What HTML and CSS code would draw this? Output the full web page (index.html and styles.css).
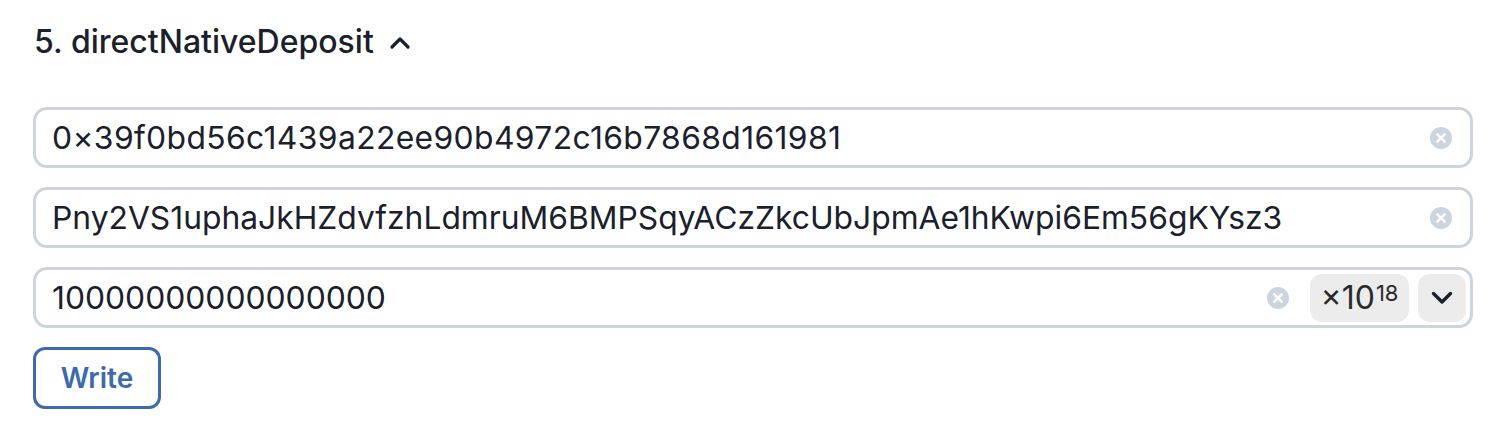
FILE: index.html
```html
<!DOCTYPE html>
<html>
<head>
<meta charset="utf-8">
<link rel="stylesheet" href="styles.css">
</head>
<body>
<div class="section">
  <div class="title">
    <span class="title-text">5. directNativeDeposit</span>
    <svg class="chev-up" width="22" height="14" viewBox="0 0 22 14"><path d="M3 11 L11 3 L19 11" fill="none" stroke="#1a202c" stroke-width="3.2" stroke-linecap="round" stroke-linejoin="round"/></svg>
  </div>
  <div class="fields">
    <div class="field">
      <span class="value value-address">0×39f0bd56c1439a22ee90b4972c16b7868d161981</span>
      <span class="clear"><svg width="22" height="22" viewBox="0 0 22 22"><circle cx="11" cy="11" r="11" fill="#cbd5e0"/><path d="M7.3 7.3 L14.7 14.7 M14.7 7.3 L7.3 14.7" stroke="#fff" stroke-width="2.6" stroke-linecap="round"/></svg></span>
    </div>
    <div class="field">
      <span class="value">Pny2VS1uphaJkHZdvfzhLdmruM6BMPSqyACzZkcUbJpmAe1hKwpi6Em56gKYsz3</span>
      <span class="clear"><svg width="22" height="22" viewBox="0 0 22 22"><circle cx="11" cy="11" r="11" fill="#cbd5e0"/><path d="M7.3 7.3 L14.7 14.7 M14.7 7.3 L7.3 14.7" stroke="#fff" stroke-width="2.6" stroke-linecap="round"/></svg></span>
    </div>
    <div class="field field-num">
      <span class="value">10000000000000000</span>
      <span class="clear"><svg width="22" height="22" viewBox="0 0 22 22"><circle cx="11" cy="11" r="11" fill="#cbd5e0"/><path d="M7.3 7.3 L14.7 14.7 M14.7 7.3 L7.3 14.7" stroke="#fff" stroke-width="2.6" stroke-linecap="round"/></svg></span>
      <span class="badge">×10<sup>18</sup></span>
      <span class="drop"><svg width="24" height="15" viewBox="0 0 24 15"><path d="M3.5 3.5 L12 12 L20.5 3.5" fill="none" stroke="#1a202c" stroke-width="3.4" stroke-linecap="round" stroke-linejoin="round"/></svg></span>
    </div>
  </div>
  <button class="write">Write</button>
</div>
</body>
</html>
```
FILE: styles.css
```css
* { box-sizing: border-box; }
html, body { margin: 0; padding: 0; background: #fff; }
body { font-family: Inter, "Noto Sans", sans-serif; color: #1a202c; }
.section { padding: 22px 27px 0 33px; }
.title {
  display: flex;
  align-items: center;
  gap: 15px;
  height: 40px;
  font-size: 32px;
  line-height: 40px;
  font-weight: 500;
}
.title-text { padding-left: 1px; }
.chev-up { margin-top: 2px; }
.fields {
  margin-top: 45px;
  display: flex;
  flex-direction: column;
  gap: 19px;
}
.field {
  height: 61px;
  border: 3px solid #cbd5e0;
  border-radius: 14px;
  display: flex;
  align-items: center;
  padding: 0 16px 0 16px;
  font-size: 31.8px;
}
.value { flex: 1; white-space: nowrap; }
.value-address { letter-spacing: 0.38px; }
.clear { display: flex; margin-right: 2px; }
.field-num { padding-right: 4px; }
.field-num .clear { margin-right: 21px; }
.badge {
  height: 48px;
  width: 99px;
  background: #ececec;
  border-radius: 12px;
  display: flex;
  align-items: center;
  justify-content: center;
  font-size: 32px;
  color: #2a2a2a;
}
.badge sup { font-size: 22px; line-height: 1; position: relative; top: -5px; vertical-align: top; margin-left: 1px; }
.drop {
  margin-left: 9px;
  width: 48px;
  height: 48px;
  background: #ececec;
  border-radius: 12px;
  display: flex;
  align-items: center;
  justify-content: center;
}
.write {
  margin-top: 19px;
  width: 128px;
  height: 62px;
  border: 3px solid #3d6aab;
  border-radius: 12px;
  background: #fff;
  color: #3d6aab;
  font-family: Inter, "Noto Sans", sans-serif;
  font-size: 28px;
  font-weight: 600;
  padding: 0;
}
```
